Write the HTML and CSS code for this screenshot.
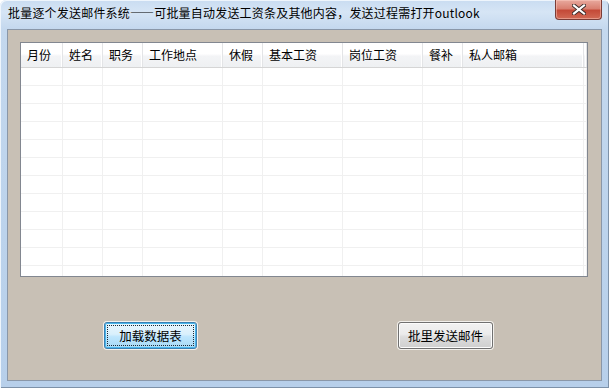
FILE: index.html
```html
<!DOCTYPE html>
<html lang="zh-CN">
<head>
    <meta charset="UTF-8">
    <title>批量逐个发送邮件系统</title>
    <link rel="stylesheet" href="styles.css">
</head>
<body>

<div class="window">
    <!-- Title bar -->
    <div class="titlebar">
        <div class="title">批量逐个发送邮件系统——可批量自动发送工资条及其他内容，发送过程需打开outlook</div>
        <div class="close-btn">
            <svg width="14" height="11" viewBox="0 0 14 11">
                <path d="M2 1.5 L12 9.5 M12 1.5 L2 9.5" stroke="#3a2a28" stroke-width="4" stroke-linecap="square"/>
                <path d="M2 1.5 L12 9.5 M12 1.5 L2 9.5" stroke="#ffffff" stroke-width="2.2" stroke-linecap="square"/>
            </svg>
        </div>
    </div>

    <!-- Client area -->
    <div class="client">
        <div class="grid">
            <div class="grid-head">
                <div class="cell c1">月份</div>
                <div class="cell c2">姓名</div>
                <div class="cell c3">职务</div>
                <div class="cell c4">工作地点</div>
                <div class="cell c5">休假</div>
                <div class="cell c6">基本工资</div>
                <div class="cell c7">岗位工资</div>
                <div class="cell c8">餐补</div>
                <div class="cell c9">私人邮箱</div>
                <div class="cell c10"></div>
            </div>
            <div class="grid-body" id="gridBody"></div>
        </div>

        <div class="actions">
            <button class="btn btn-focus"><span>加载数据表</span></button>
            <button class="btn btn-send"><span>批里发送邮件</span></button>
        </div>
    </div>
</div>

<script>
    // empty rows of the data grid
    const body = document.getElementById('gridBody');
    for (let i = 0; i < 12; i++) {
        const row = document.createElement('div');
        row.className = 'grid-row';
        for (let c = 1; c <= 10; c++) {
            const cell = document.createElement('div');
            cell.className = 'cell c' + c;
            row.appendChild(cell);
        }
        body.appendChild(row);
    }
</script>

</body>
</html>
```

FILE: styles.css
```css
body {
    margin: 0;
    font-family: "Noto Sans CJK SC", "Noto Sans", sans-serif;
    font-size: 12px;
    color: #000;
    background: #ffffff;
}

.window {
    width: 609px;
    height: 388px;
    box-sizing: border-box;
    padding: 0 7px 7px 7px;
    border-radius: 6px 6px 0 0;
    background: linear-gradient(to bottom, #c9dcf1 0px, #d6e5f5 12px, #c4d8ee 29px, #bcd3ec 60%, #b7cfea 100%);
    box-shadow: inset 1px 1px 0 #eef5fc, inset -1px -1px 0 #7d91a8;
    display: flex;
    flex-direction: column;
}

.titlebar {
    height: 29px;
    display: flex;
    align-items: flex-start;
}
.title {
    flex: 1;
    padding-top: 4px;
    padding-left: 1px;
    line-height: 17px;
    white-space: nowrap;
    letter-spacing: 0.2px;
}
.close-btn {
    width: 45px;
    height: 19px;
    border: 1px solid #7b3c36;
    border-top: none;
    border-radius: 0 0 4px 4px;
    background: linear-gradient(to bottom, #e8a99e 0%, #d98071 45%, #c44a38 55%, #d16a55 100%);
    box-shadow: inset 0 0 0 1px rgba(255, 210, 200, 0.45);
    display: flex;
    align-items: center;
    justify-content: center;
}

.client {
    flex: 1;
    border: 1px solid #8a97a8;
    background-color: #c8c0b5;
    padding: 12px 0 0 12px;
}

.grid {
    width: 568px;
    height: 235px;
    box-sizing: border-box;
    border: 1px solid #828790;
    background-color: #fff;
    overflow: hidden;
}
.grid-head {
    display: flex;
    height: 25px;
    box-sizing: border-box;
    border-bottom: 1px solid #d5d5d5;
    background: linear-gradient(to bottom, #ffffff 0%, #ffffff 45%, #f3f4f6 55%, #eef0f2 100%);
}
.grid-head .cell {
    line-height: 24px;
    padding-left: 6px;
    border-right: 1px solid #e3e4e6;
    box-shadow: inset -1px 0 0 #ffffff;
    white-space: nowrap;
}
.grid-head .c1 {
    padding-left: 6px;
}
.grid-row {
    display: flex;
    height: 18px;
    box-sizing: border-box;
    border-bottom: 1px solid #f0f0f0;
}
.grid-row .cell {
    border-right: 1px solid #f0f0f0;
}
.cell {
    box-sizing: border-box;
    flex: none;
}
.c1 { width: 42px; }
.c2 { width: 40px; }
.c3 { width: 40px; }
.c4 { width: 80px; }
.c5 { width: 40px; }
.c6 { width: 80px; }
.c7 { width: 80px; }
.c8 { width: 40px; }
.c9 { width: 121px; }
.c10 { width: 3px; }
.grid-head .c10 { padding: 0; }

.actions {
    display: flex;
    gap: 201px;
    margin-top: 45px;
    padding-left: 84px;
}
.btn {
    width: 93px;
    height: 27px;
    padding: 0;
    font-family: "Noto Sans CJK SC", "Noto Sans", sans-serif;
    font-size: 12.5px;
    color: #000;
    border-radius: 3px;
    box-sizing: border-box;
}
.btn-focus {
    border: 1px solid #3c7fb1;
    background: linear-gradient(to bottom, #eaf6fd 0%, #d9f0fc 45%, #bee6fd 55%, #a7d9f5 100%);
    box-shadow: 0 0 0 1px #f2f0ec, inset 0 0 0 1px #48b6ec;
}
.btn-focus span {
    display: block;
    margin: 2px;
    line-height: 19px;
    border: 1px dotted #1b2a36;
}
.btn-send {
    width: 95px;
    border: 1px solid #707070;
    background: linear-gradient(to bottom, #f2f2f2 0%, #ebebeb 45%, #dddddd 55%, #cfcfcf 100%);
    box-shadow: 0 0 0 1px #f2f0ec, inset 0 0 0 1px #fcfcfc;
}
```
